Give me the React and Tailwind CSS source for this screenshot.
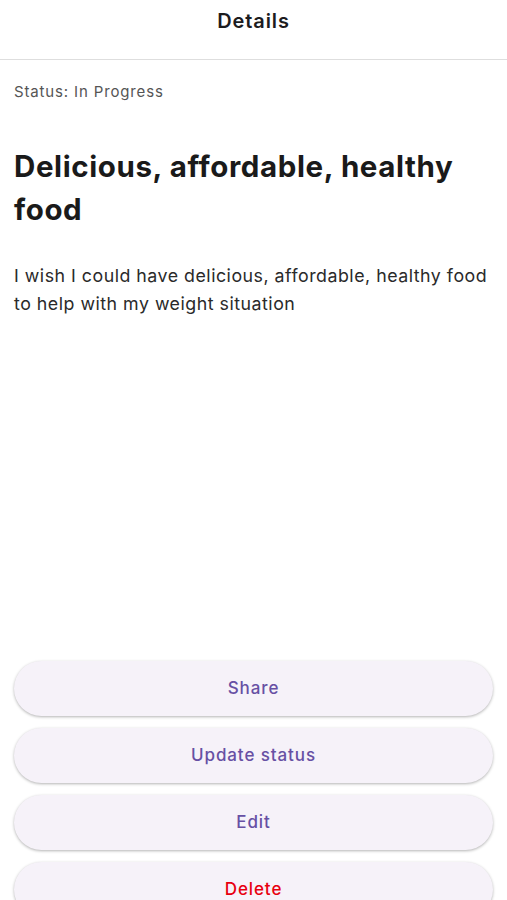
export default function App() {
  const actions = [
    { label: 'Share', danger: false },
    { label: 'Update status', danger: false },
    { label: 'Edit', danger: false },
    { label: 'Delete', danger: true },
  ];

  return (
    <div className="h-screen overflow-hidden bg-white font-['Inter',sans-serif]">
      <div className="flex h-[917px] flex-col">
        {/* Header */}
        <header className="flex h-[60px] shrink-0 items-center justify-center border-b border-[#dedede] pb-[18px]">
          <h1 className="text-[20px] font-semibold tracking-[0.9px] text-[#1c1c1e]">Details</h1>
        </header>

        {/* Content */}
        <main className="px-[14px] pt-[22px]">
          <p className="text-[15px] leading-[20px] tracking-[0.85px] text-[#555]">Status: In Progress</p>
          <h2 className="mt-[43px] text-[29.5px] font-bold leading-[43px] tracking-[0.6px] text-[#1a1a1a]">
            Delicious, affordable, healthy food
          </h2>
          <p className="mt-[31px] text-[17.8px] leading-[28px] tracking-[0.5px] text-[#2a2a2a]">
            I wish I could have delicious, affordable, healthy food to help with my weight situation
          </p>
        </main>

        {/* Actions */}
        <div className="mt-auto flex flex-col gap-[12px] px-[14px]">
          {actions.map((a) => (
            <button
              key={a.label}
              className={`h-[55px] w-full rounded-full bg-[#f6f2f9] text-[17px] font-medium tracking-[0.9px] shadow-[0_1px_3px_rgba(0,0,0,0.3)] ${a.danger ? 'text-[#e8000f]' : 'text-[#6750a4]'}`}
            >
              {a.label}
            </button>
          ))}
        </div>
      </div>
    </div>
  );
}
